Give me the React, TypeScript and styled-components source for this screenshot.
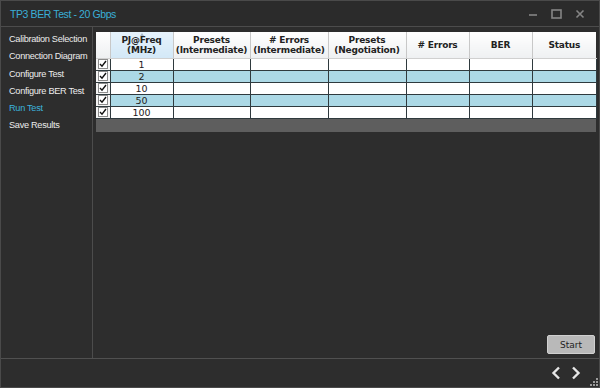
import styled, { createGlobalStyle } from 'styled-components';

const GlobalStyle = createGlobalStyle`
  html, body {
    margin: 0;
    padding: 0;
    background: #2d2d2d;
  }
  * {
    box-sizing: border-box;
  }
`;

const steps = [
  'Calibration Selection',
  'Connection Diagram',
  'Configure Test',
  'Configure BER Test',
  'Run Test',
  'Save Results',
];

const columns = [
  { title: 'PJ@Freq', sub: '(MHz)', width: 63, sorted: true },
  { title: 'Presets', sub: '(Intermediate)', width: 77 },
  { title: '# Errors', sub: '(Intermediate)', width: 78 },
  { title: 'Presets', sub: '(Negotiation)', width: 78 },
  { title: '# Errors', width: 63 },
  { title: 'BER', width: 63 },
  { title: 'Status', width: 64 },
];

const rows = ['1', '2', '10', '50', '100'];

export default function App() {
  return (
    <>
      <GlobalStyle />
      <Window>
        <TitleBar>
          <Title>TP3 BER Test - 20 Gbps</Title>
          <Controls>
            <svg width="10" height="10" viewBox="0 0 10 10">
              <path d="M1 6h8" stroke="#858585" strokeWidth="1.6" />
            </svg>
            <svg width="11" height="10" viewBox="0 0 11 10">
              <rect x="1" y="1" width="9" height="8" fill="none" stroke="#858585" strokeWidth="1.6" />
            </svg>
            <svg width="10" height="10" viewBox="0 0 10 10">
              <path d="M1.5 1.5l7 7M8.5 1.5l-7 7" stroke="#858585" strokeWidth="1.6" />
            </svg>
          </Controls>
        </TitleBar>

        <Body>
          <Sidebar>
            {steps.map((s) => (
              <Step key={s} $active={s === 'Run Test'}>
                {s}
              </Step>
            ))}
          </Sidebar>

          <Main>
            <Grid>
              <Table>
                <colgroup>
                  <col style={{ width: 14 }} />
                  {columns.map((c, i) => (
                    <col key={i} style={{ width: c.width }} />
                  ))}
                </colgroup>
                <thead>
                  <tr>
                    <HeadCell />
                    {columns.map((c, i) => (
                      <HeadCell key={i} $sorted={c.sorted}>
                        {c.sorted && <SortMark />}
                        {c.title}
                        {c.sub && (
                          <>
                            <br />
                            {c.sub}
                          </>
                        )}
                      </HeadCell>
                    ))}
                  </tr>
                </thead>
                <tbody>
                  {rows.map((r, i) => (
                    <Row key={r} $alt={i % 2 === 1}>
                      <CheckCell>
                        <CheckBox>
                          <svg width="8" height="8" viewBox="0 0 8 8">
                            <path d="M1 4l2 2.2L7 1" fill="none" stroke="#111" strokeWidth="1.4" />
                          </svg>
                        </CheckBox>
                      </CheckCell>
                      <Cell>{r}</Cell>
                      {columns.slice(1).map((_, j) => (
                        <Cell key={j} />
                      ))}
                    </Row>
                  ))}
                </tbody>
              </Table>
            </Grid>
            <Actions>
              <StartButton>Start</StartButton>
            </Actions>
          </Main>
        </Body>

        <Footer>
          <Nav>
            <svg width="10" height="14" viewBox="0 0 10 14">
              <path d="M8 1.5L2.5 7 8 12.5" fill="none" stroke="#e6e6e6" strokeWidth="2.4" />
            </svg>
            <svg width="10" height="14" viewBox="0 0 10 14">
              <path d="M2 1.5L7.5 7 2 12.5" fill="none" stroke="#e6e6e6" strokeWidth="2.4" />
            </svg>
          </Nav>
          <Grip>
            <svg width="8" height="8" viewBox="0 0 8 8">
              <g fill="#9a9a9a">
                <rect x="6" y="0" width="2" height="2" />
                <rect x="3" y="3" width="2" height="2" />
                <rect x="6" y="3" width="2" height="2" />
                <rect x="0" y="6" width="2" height="2" />
                <rect x="3" y="6" width="2" height="2" />
                <rect x="6" y="6" width="2" height="2" />
              </g>
            </svg>
          </Grip>
        </Footer>
      </Window>
    </>
  );
}

const Window = styled.div`
  width: 600px;
  height: 388px;
  display: flex;
  flex-direction: column;
  background: #2d2d2d;
  border: 1px solid #4a4a4a;
  font-family: 'DejaVu Sans', 'Liberation Sans', sans-serif;
  position: relative;
`;

const TitleBar = styled.div`
  height: 26px;
  flex: none;
  display: flex;
  align-items: center;
  justify-content: space-between;
  padding: 0 14px 0 9px;
  border-bottom: 1px solid #4c4c4c;
  background: #2b2b2b;
`;

const Title = styled.div`
  color: #3aaed6;
  font-family: 'Liberation Sans', Arial, sans-serif;
  font-size: 10.5px;
  letter-spacing: -0.4px;
`;

const Controls = styled.div`
  display: flex;
  align-items: center;
  gap: 13px;
`;

const Body = styled.div`
  flex: 1;
  display: flex;
  min-height: 0;
`;

const Sidebar = styled.div`
  width: 92px;
  flex: none;
  border-right: 1px solid #4c4c4c;
  padding: 4px 0 0 8px;
  display: flex;
  flex-direction: column;
`;

const Step = styled.div<{ $active?: boolean }>`
  height: 17.3px;
  line-height: 17px;
  font-family: 'Liberation Sans', Arial, sans-serif;
  font-size: 9.2px;
  letter-spacing: -0.3px;
  white-space: nowrap;
  color: ${(p) => (p.$active ? '#3cb2dc' : '#ececec')};
`;

const Main = styled.div`
  flex: 1;
  display: flex;
  flex-direction: column;
  padding: 5px 4px 4px 3px;
`;

const Grid = styled.div`
  width: 500px;
  height: 100px;
  background: #5e5e5e;
`;

const Table = styled.table`
  border-collapse: collapse;
  table-layout: fixed;
  width: 500px;
  font-size: 9px;
`;

const HeadCell = styled.th<{ $sorted?: boolean }>`
  height: 26px;
  padding: 0;
  font-weight: bold;
  line-height: 10px;
  letter-spacing: -0.2px;
  color: #222;
  text-align: center;
  vertical-align: middle;
  position: relative;
  background: ${(p) =>
    p.$sorted
      ? 'linear-gradient(#e6f2fb, #d3e8f7)'
      : 'linear-gradient(#ffffff, #eef0f2)'};
  border-left: 1px solid #c8c8c8;
  border-bottom: 1px solid #d0d0d0;
  &:first-child {
    border-left: none;
    background: linear-gradient(#ffffff, #eef0f2);
  }
`;

const SortMark = styled.span`
  position: absolute;
  top: 1px;
  left: 50%;
  margin-left: -2px;
  width: 0;
  height: 0;
  border-left: 2.5px solid transparent;
  border-right: 2.5px solid transparent;
  border-bottom: 3px solid #a8b8c8;
`;

const Row = styled.tr<{ $alt?: boolean }>`
  background: ${(p) => (p.$alt ? '#acd9e6' : '#ffffff')};
`;

const Cell = styled.td`
  height: 12px;
  padding: 0;
  font-size: 9.5px;
  line-height: 11px;
  color: #222;
  text-align: center;
  border: 1px solid #2f3a3e;
  border-top: none;
`;

const CheckCell = styled(Cell)`
  border-left: none;
  background: #f4f4f4;
`;

const CheckBox = styled.div`
  width: 10px;
  height: 10px;
  margin: 0 auto;
  border: 1px solid #8c8c8c;
  background: #ffffff;
  display: flex;
  align-items: center;
  justify-content: center;
`;

const Actions = styled.div`
  margin-top: auto;
  display: flex;
  justify-content: flex-end;
  padding-right: 1px;
`;

const StartButton = styled.button`
  width: 48px;
  height: 19px;
  padding: 0;
  border: 1px solid #d0d0d0;
  border-radius: 2px;
  background: #b9b9b9;
  color: #222;
  font-family: 'DejaVu Sans', 'Liberation Sans', sans-serif;
  font-size: 9px;
`;

const Footer = styled.div`
  height: 29px;
  flex: none;
  border-top: 1px solid #505050;
  display: flex;
  align-items: center;
  justify-content: flex-end;
  padding-right: 18px;
`;

const Nav = styled.div`
  display: flex;
  gap: 10px;
  align-items: center;
`;

const Grip = styled.div`
  position: absolute;
  right: 1px;
  bottom: 1px;
  line-height: 0;
`;
